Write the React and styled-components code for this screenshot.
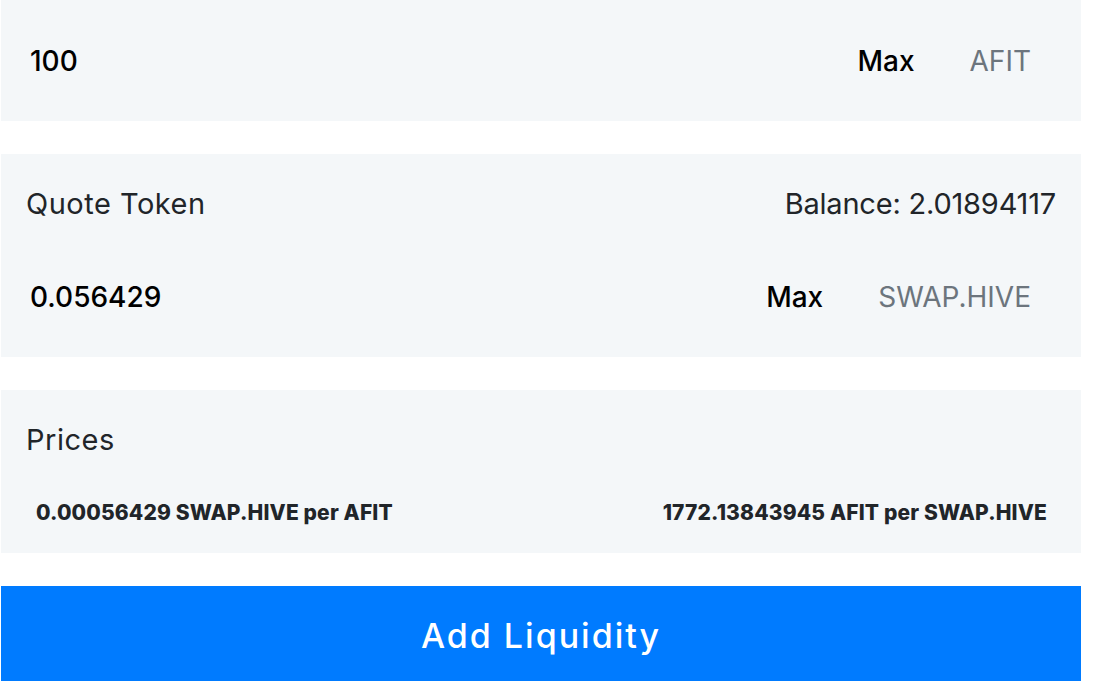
import React from "react";
import styled, { createGlobalStyle } from "styled-components";

const Global = createGlobalStyle`
  html, body { margin: 0; padding: 0; background: #fff; }
  body { font-family: Inter, "Noto Sans", sans-serif; color: #212529; }
`;

const Page = styled.div`
  width: 1080px;
  padding-left: 1px;
  display: flex;
  flex-direction: column;
  gap: 33px;
`;

const Panel = styled.section`
  background: #f4f7f9;
  padding: ${(p) => p.$pad || "24px 25px 30px"};
  display: flex;
  flex-direction: column;
`;

const Header = styled.div`
  height: 50px;
  display: flex;
  align-items: center;
  justify-content: space-between;
  font-size: 29px;
  font-weight: 400;
  color: #212529;
  margin-bottom: ${(p) => p.$mb || "39px"};
`;

const Label = styled.span`
  letter-spacing: ${(p) => p.$ls || "0"};
`;

const InputRow = styled.div`
  height: 60px;
  display: flex;
  align-items: center;
`;

const AmountInput = styled.input`
  flex: 1;
  min-width: 0;
  border: none;
  background: transparent;
  outline: none;
  font-family: inherit;
  font-size: 28px;
  font-weight: 500;
  color: #000;
  padding: 0 0 0 4px;
`;

const MaxButton = styled.button`
  border: none;
  background: transparent;
  font-family: inherit;
  font-size: 28px;
  font-weight: 500;
  color: #000;
  padding: 0;
  margin-right: 55px;
  cursor: pointer;
`;

const TokenLabel = styled.span`
  font-size: 28px;
  font-weight: 400;
  color: #6c757d;
  padding-right: 25px;
`;

const PriceRow = styled.div`
  height: 30px;
  display: flex;
  align-items: center;
  justify-content: space-between;
  padding: 0 9px 0 10px;
`;

const Price = styled.span`
  font-size: 21px;
  font-weight: 800;
  color: #212529;
  letter-spacing: 0.15px;
`;

const AddButton = styled.button`
  height: 95px;
  border: none;
  background: #007bff;
  color: #fff;
  font-family: inherit;
  font-size: 34px;
  font-weight: 500;
  letter-spacing: 2px;
  padding: 4px 0 0;
  cursor: pointer;
`;

export default function App() {
  return (
    <>
      <Global />
      <Page>
        <Panel $pad="31px 25px 30px">
          <InputRow>
            <AmountInput defaultValue="100" />
            <MaxButton>Max</MaxButton>
            <TokenLabel>AFIT</TokenLabel>
          </InputRow>
        </Panel>
        <Panel>
          <Header>
            <Label $ls="0.5px">Quote Token</Label>
            <Label $ls="-0.2px">Balance: 2.01894117</Label>
          </Header>
          <InputRow>
            <AmountInput defaultValue="0.056429" />
            <MaxButton>Max</MaxButton>
            <TokenLabel>SWAP.HIVE</TokenLabel>
          </InputRow>
        </Panel>
        <Panel $pad="24px 25px 26px">
          <Header $mb="33px">
            <Label $ls="0.5px">Prices</Label>
          </Header>
          <PriceRow>
            <Price>0.00056429 SWAP.HIVE per AFIT</Price>
            <Price>1772.13843945 AFIT per SWAP.HIVE</Price>
          </PriceRow>
        </Panel>
        <AddButton>Add Liquidity</AddButton>
      </Page>
    </>
  );
}
